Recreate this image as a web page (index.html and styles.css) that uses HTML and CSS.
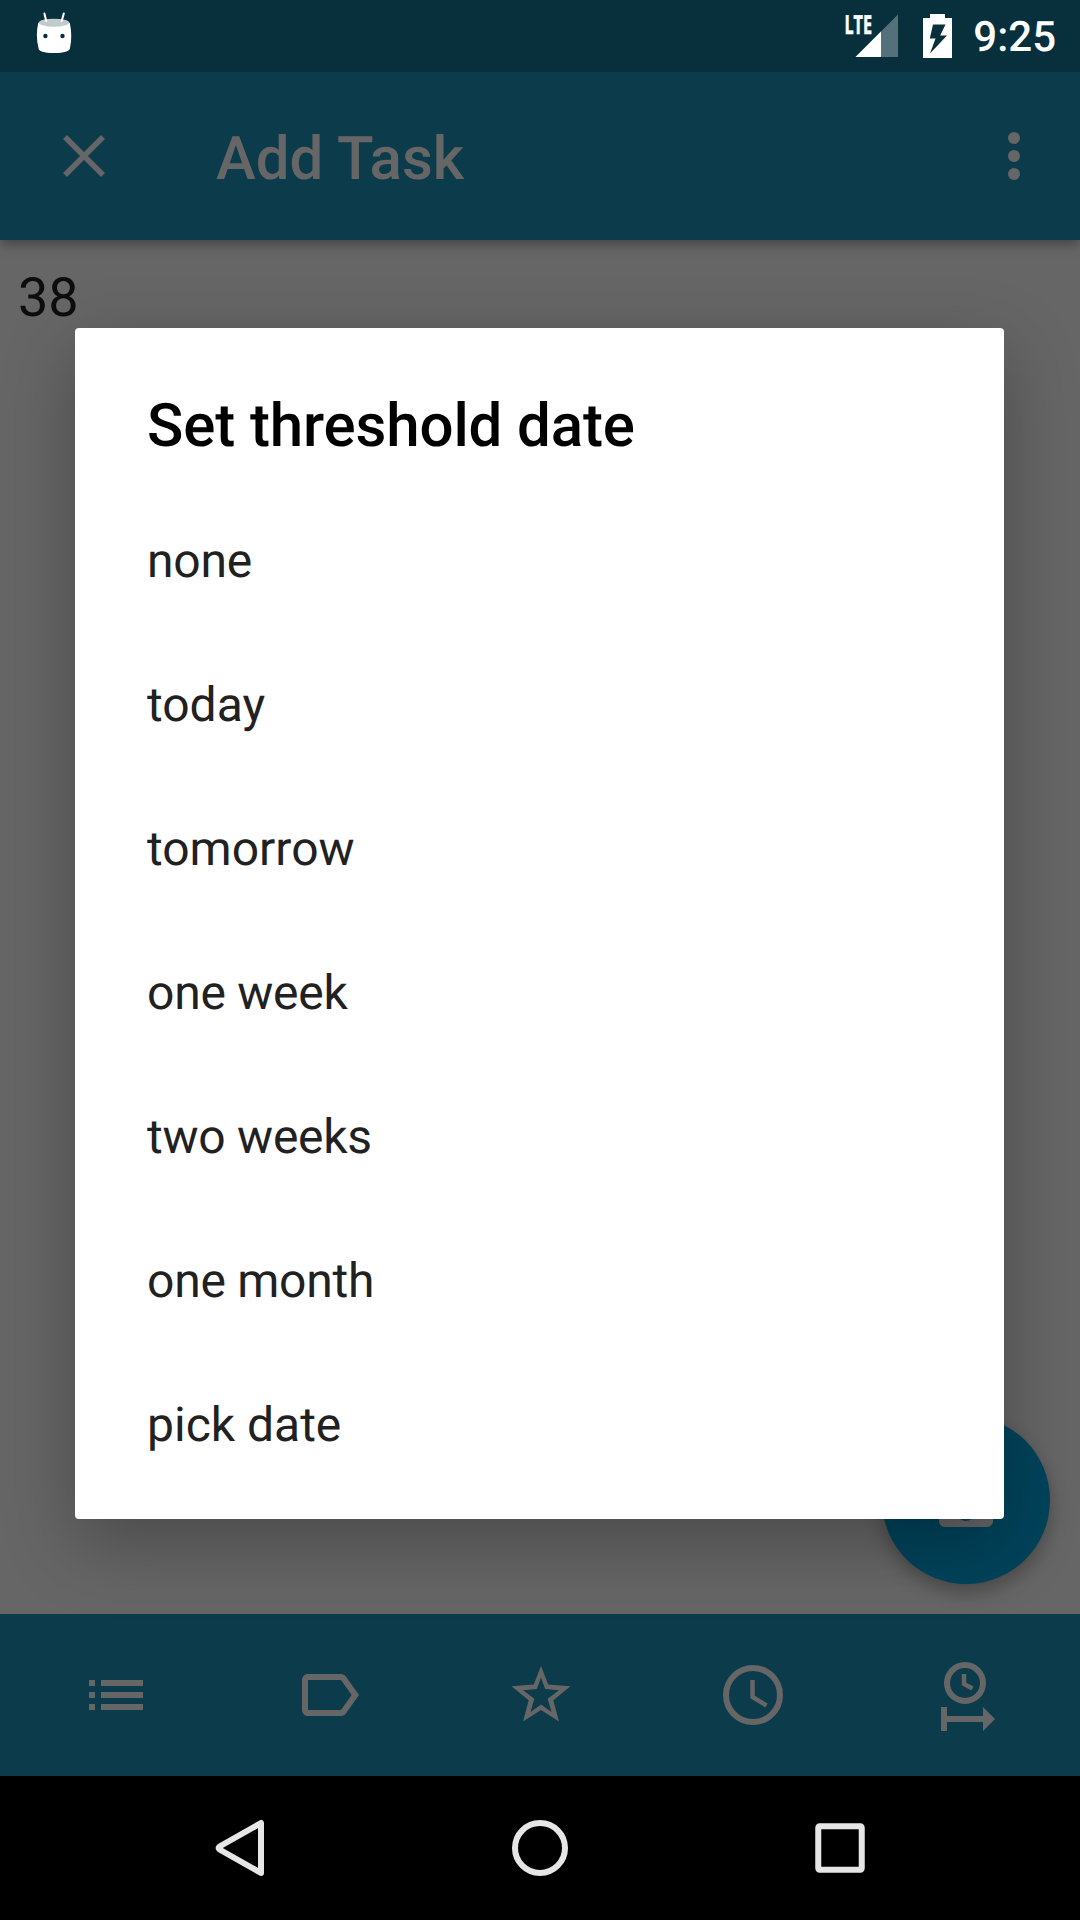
FILE: index.html
```html
<!DOCTYPE html>
<html lang="en">
<head>
<meta charset="utf-8">
<title>Add Task</title>
<link rel="stylesheet" href="styles.css">
</head>
<body>
<div class="screen">
  <header class="status">
    <svg class="robot" width="36" height="44" viewBox="36 11 36 44">
      <path d="M38 24Q38 20 54 20T70 24Q72.500 36 70 48Q69.500 53 54 53T38.500 48Q35.500 36 38 24Z" fill="#fff"/>
      <ellipse cx="54" cy="22.700" rx="15" ry="4" fill="#c1cbce"/>
      <path d="M44.400 13.500L46.200 21M63.800 13.500L61.700 21" stroke="#fff" stroke-width="2" stroke-linecap="round"/>
      <circle cx="45.400" cy="36" r="2.200" fill="#08303c"/><circle cx="62.500" cy="36" r="2.200" fill="#08303c"/>
    </svg>
    <div class="indicators">
      <svg class="signal" width="59" height="58" viewBox="840 0 59 58">
        <path d="M898 14.500V57H855.500Z" fill="#54707a"/>
        <path d="M881 31.500V57H855.500Z" fill="#fff"/>
        <text class="network" x="844.500" y="33.500" textLength="27.500" lengthAdjust="spacingAndGlyphs">LTE</text>
      </svg>
      <svg class="battery" width="30" height="44" viewBox="923 14 30 44">
        <path fill="#fff" fill-rule="evenodd" d="M930 14h15v4h7v40h-29V18h7ZM933 24.500L929.800 38.500H935.500L930 53.500L947 35.500H940.200L945.500 24.500Z"/>
      </svg>
      <span class="clock">9:25</span>
    </div>
  </header>
  <div class="toolbar">
    <svg class="close" width="72" height="72" viewBox="0 0 72 72"><path d="M17 17L55 55M55 17L17 55" stroke="#666" stroke-width="5.500"/></svg>
    <h1 class="toolbar-title">Add Task</h1>
    <svg class="overflow" width="12" height="48" viewBox="0 0 12 48" fill="#666"><circle cx="6" cy="6" r="6"/><circle cx="6" cy="24" r="6"/><circle cx="6" cy="42" r="6"/></svg>
  </div>
  <main class="editor">
    <div class="task-text">38</div>
    <div class="fab"><svg width="72" height="72" viewBox="0 0 24 24" fill="#666"><path d="M17 3H5c-1.110 0-2 .9-2 2v14c0 1.100.89 2 2 2h14c1.100 0 2-.9 2-2V7l-4-4zm-5 16c-1.660 0-3-1.340-3-3s1.340-3 3-3 3 1.340 3 3-1.340 3-3 3zm3-10H5V5h10v4z"/></svg></div>
  </main>
  <section class="dialog">
    <h2 class="dialog-title">Set threshold date</h2>
    <ul class="options">
      <li class="tight">none</li><li>today</li><li>tomorrow</li><li class="tight">one week</li><li class="tight">two weeks</li><li class="tight">one month</li><li>pick date</li>
    </ul>
  </section>
  <div class="actions">
    <svg width="72" height="72" viewBox="0 0 72 72"><path d="M9 21h6v6H9zM9 33h6v6H9zM9 45h6v6H9zM21 21h42v6H21zM21 33h42v6H21zM21 45h42v6H21z"/></svg>
    <svg width="72" height="72" viewBox="0 0 24 24"><path d="M17.630 5.840C17.270 5.330 16.670 5 16 5H5C3.900 5 3 5.900 3 7v10c0 1.100.9 2 2 2h11c.67 0 1.270-.33 1.630-.84L22 12l-4.370-6.160zM16 17H5V7h11l3.550 5L16 17z"/></svg>
    <svg width="72" height="72" viewBox="0 0 72 72"><path fill-rule="evenodd" d="M36 7L43.200 25.500L65.500 27.200L48.300 41.300L54 62.500L36 51L18 62.500L23.700 41.300L6.500 27.200L28.800 25.500ZM36 18.500L31.800 30L18 31.200L29.300 39.800L25.500 53L36 45.500L46.500 53L42.700 39.800L54 31.200L40.200 30Z"/></svg>
    <svg width="72" height="72" viewBox="0 0 72 72"><circle class="ring" cx="36" cy="36" r="27"/><path class="hand" d="M35.500 21V38L49.500 46.500"/></svg>
    <svg width="72" height="72" viewBox="0 0 72 72"><circle class="ring" cx="35" cy="24" r="18"/><path class="hand" d="M34 15V25L42.500 29.500"/><path d="M11 48h6v9h36v-9l12 12-12 12v-9H17v9h-6z"/></svg>
  </div>
  <nav class="navbar">
    <svg width="60" height="60" viewBox="210 1818 60 60"><path d="M261 1823V1873L219.500 1849.500Q218 1848 219.500 1846.500Z"/></svg>
    <svg width="60" height="60" viewBox="0 0 60 60"><circle cx="30" cy="30" r="25"/></svg>
    <svg width="60" height="60" viewBox="0 0 60 60"><rect x="8.250" y="8.250" width="43.500" height="43.500" rx="1.500"/></svg>
  </nav>
</div>
</body>
</html>
```
FILE: styles.css
```css
* { box-sizing: border-box; margin: 0; padding: 0; }
body { font-family: Roboto, sans-serif; background: #666; text-rendering: geometricPrecision; }
svg { display: block; flex: none; }
.screen {
  position: relative;
  width: 1080px;
  height: 1920px;
  overflow: hidden;
  display: grid;
  grid-template-rows: 72px 168px 1374px 162px 144px;
}
.status {
  background: #08303c;
  display: flex;
  justify-content: space-between;
  padding: 0 24px 0 36px;
}
.robot { margin-top: 11px; }
.indicators { display: flex; }
.signal { margin-right: 24px; }
.battery { margin: 14px 20px 0 0; }
.network { font: 700 26px "Open Sans", sans-serif; fill: #fff; stroke: #fff; stroke-width: .7px; }
.clock { font-size: 42px; font-weight: 500; line-height: 76px; height: 72px; color: #fff; }
.toolbar {
  position: relative;
  z-index: 1;
  background: #0c3c4b;
  box-shadow: 0 3px 12px rgba(0, 0, 0, .4);
  clip-path: inset(0 0 -30px 0);
  display: flex;
  align-items: center;
  padding: 0 60px 0 48px;
}
.toolbar-title { flex: 1; margin-left: 96px; font-size: 60px; font-weight: 500; line-height: 70px; color: #666; padding-top: 5px; }
.editor { position: relative; background: #666; padding: 27px 18px; }
.task-text { font-size: 54px; line-height: 64px; color: #0d0d0d; }
.fab {
  position: absolute;
  right: 30px;
  bottom: 30px;
  width: 168px;
  height: 168px;
  border-radius: 50%;
  background: #00435b;
  box-shadow: 0 8px 18px rgba(0, 0, 0, .28);
  display: grid;
  place-items: center;
}
.dialog {
  position: absolute;
  z-index: 2;
  left: 75px;
  top: 328px;
  width: 929px;
  height: 1191px;
  border-radius: 4px;
  background: #fff;
  box-shadow: 0 24px 72px rgba(0, 0, 0, .28);
  padding: 63px 72px 0;
}
.dialog-title { font-size: 60px; font-weight: 500; line-height: 70px; letter-spacing: -.12px; color: #000; }
.options { list-style: none; margin-top: 28px; }
.options li { height: 144px; line-height: 144px; font-size: 48px; color: #212121; }
.options .tight { letter-spacing: -.25px; }
.actions {
  position: relative;
  background: #0c3c4b;
  padding-left: 10px;
  display: grid;
  grid-template-columns: 212px 214px 210px 214px 212px;
  align-items: center;
  justify-items: center;
  fill: #666;
}
.ring { fill: none; stroke: #666; stroke-width: 6; }
.hand { fill: none; stroke: #666; stroke-width: 4.500px; }
.navbar {
  background: #000;
  display: flex;
  align-items: center;
  justify-content: center;
  gap: 240px;
  fill: none;
  stroke: #e6e6e6;
  stroke-width: 6;
  stroke-linejoin: round;
}
```
